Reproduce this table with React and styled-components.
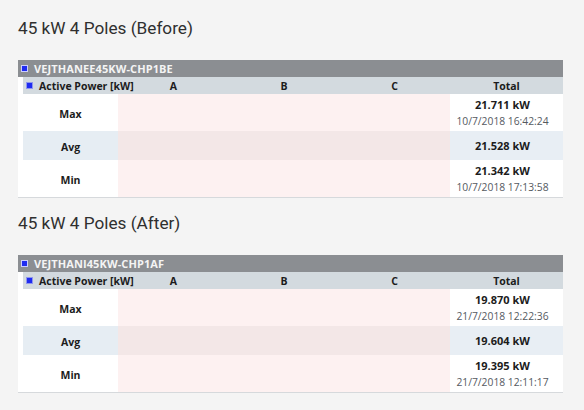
import styled, { createGlobalStyle } from "styled-components"

const GlobalStyle = createGlobalStyle`
  html, body {
    margin: 0;
    padding: 0;
    background: #f4f4f4;
  }
`

const sections = [
  {
    title: "45 kW 4 Poles (Before)",
    device: "VEJTHANEE45KW-CHP1BE",
    rows: [
      { label: "Max", value: "21.711 kW", time: "10/7/2018 16:42:24" },
      { label: "Avg", value: "21.528 kW", alt: true },
      { label: "Min", value: "21.342 kW", time: "10/7/2018 17:13:58" },
    ],
  },
  {
    title: "45 kW 4 Poles (After)",
    device: "VEJTHANI45KW-CHP1AF",
    rows: [
      { label: "Max", value: "19.870 kW", time: "21/7/2018 12:22:36" },
      { label: "Avg", value: "19.604 kW", alt: true },
      { label: "Min", value: "19.395 kW", time: "21/7/2018 12:11:17" },
    ],
  },
]

export default function App() {
  return (
    <>
      <GlobalStyle />
      <Page>
        {sections.map((s, i) => (
          <Section key={i}>
            <Title $first={i === 0}>{s.title}</Title>
            <Table>
              <GroupBar>
                <Square $light />
                {s.device}
              </GroupBar>
              <Body>
                <HeaderRow>
                  <HeadLabel>
                    <Square />
                    Active Power [kW]
                  </HeadLabel>
                  <HeadCell>A</HeadCell>
                  <HeadCell>B</HeadCell>
                  <HeadCell>C</HeadCell>
                  <HeadCell>Total</HeadCell>
                </HeaderRow>
                {s.rows.map((r) => (
                  <DataRow key={r.label} $tall={!!r.time}>
                    <LabelCell $alt={r.alt}>{r.label}</LabelCell>
                    <PhaseCell $alt={r.alt} />
                    <PhaseCell $alt={r.alt} />
                    <PhaseCell $alt={r.alt} />
                    <TotalCell $alt={r.alt}>
                      <Value>{r.value}</Value>
                      {r.time && <Time>{r.time}</Time>}
                    </TotalCell>
                  </DataRow>
                ))}
              </Body>
            </Table>
          </Section>
        ))}
      </Page>
    </>
  )
}

const Page = styled.div`
  padding: 17px 21px 0 18px;
  font-family: "Open Sans", "Noto Sans", sans-serif;
`

const Section = styled.section`
  display: flex;
  flex-direction: column;
`

const Title = styled.h2`
  margin: ${(p) => (p.$first ? "0" : "14px")} 0 21px 0;
  font-family: Roboto, "Liberation Sans", sans-serif;
  font-weight: 400;
  font-size: 17.2px;
  line-height: 22px;
  color: #2f2f2f;
`

const Table = styled.div`
  width: 545px;
  background: #ffffff;
  border-bottom: 1px solid #d6d9dc;
`

const GroupBar = styled.div`
  display: flex;
  align-items: center;
  gap: 6px;
  height: 17px;
  padding-left: 3px;
  background: #8b8e92;
  color: #f4f4f4;
  font-size: 11px;
  font-weight: 700;
  letter-spacing: 0.1px;
`

const Square = styled.span`
  width: 5px;
  height: 5px;
  background: #1f2bf0;
  border: 1px solid ${(p) => (p.$light ? "#c9ccff" : "#8f96ee")};
  flex: none;
`

const Body = styled.div`
  padding-left: 5px;
`

const grid = `
  display: grid;
  grid-template-columns: 95px 1fr 1fr 1fr 113px;
`

const HeaderRow = styled.div`
  ${grid}
  height: 17px;
  align-items: center;
  background: #d3dadf;
  color: #1c1c1c;
  font-size: 10.5px;
  font-weight: 700;
`

const HeadLabel = styled.div`
  display: flex;
  align-items: center;
  gap: 6px;
  padding-left: 3px;
  white-space: nowrap;
`

const HeadCell = styled.div`
  text-align: center;
`

const DataRow = styled.div`
  ${grid}
  height: ${(p) => (p.$tall ? "37px" : "29px")};
`

const LabelCell = styled.div`
  display: flex;
  align-items: center;
  justify-content: center;
  padding-top: 3px;
  background: ${(p) => (p.$alt ? "#e6edf3" : "#ffffff")};
  color: #1c1c1c;
  font-size: 10.5px;
  font-weight: 700;
`

const PhaseCell = styled.div`
  background: ${(p) => (p.$alt ? "#f3e7e7" : "#fdf1f1")};
`

const TotalCell = styled.div`
  display: flex;
  flex-direction: column;
  align-items: center;
  justify-content: center;
  gap: 4px;
  padding-right: 8px;
  background: ${(p) => (p.$alt ? "#e8eef4" : "#ffffff")};
`

const Value = styled.div`
  color: #1c1c1c;
  font-size: 11px;
  font-weight: 700;
  line-height: 13px;
`

const Time = styled.div`
  color: #555a5f;
  font-size: 10.3px;
  line-height: 13px;
`
